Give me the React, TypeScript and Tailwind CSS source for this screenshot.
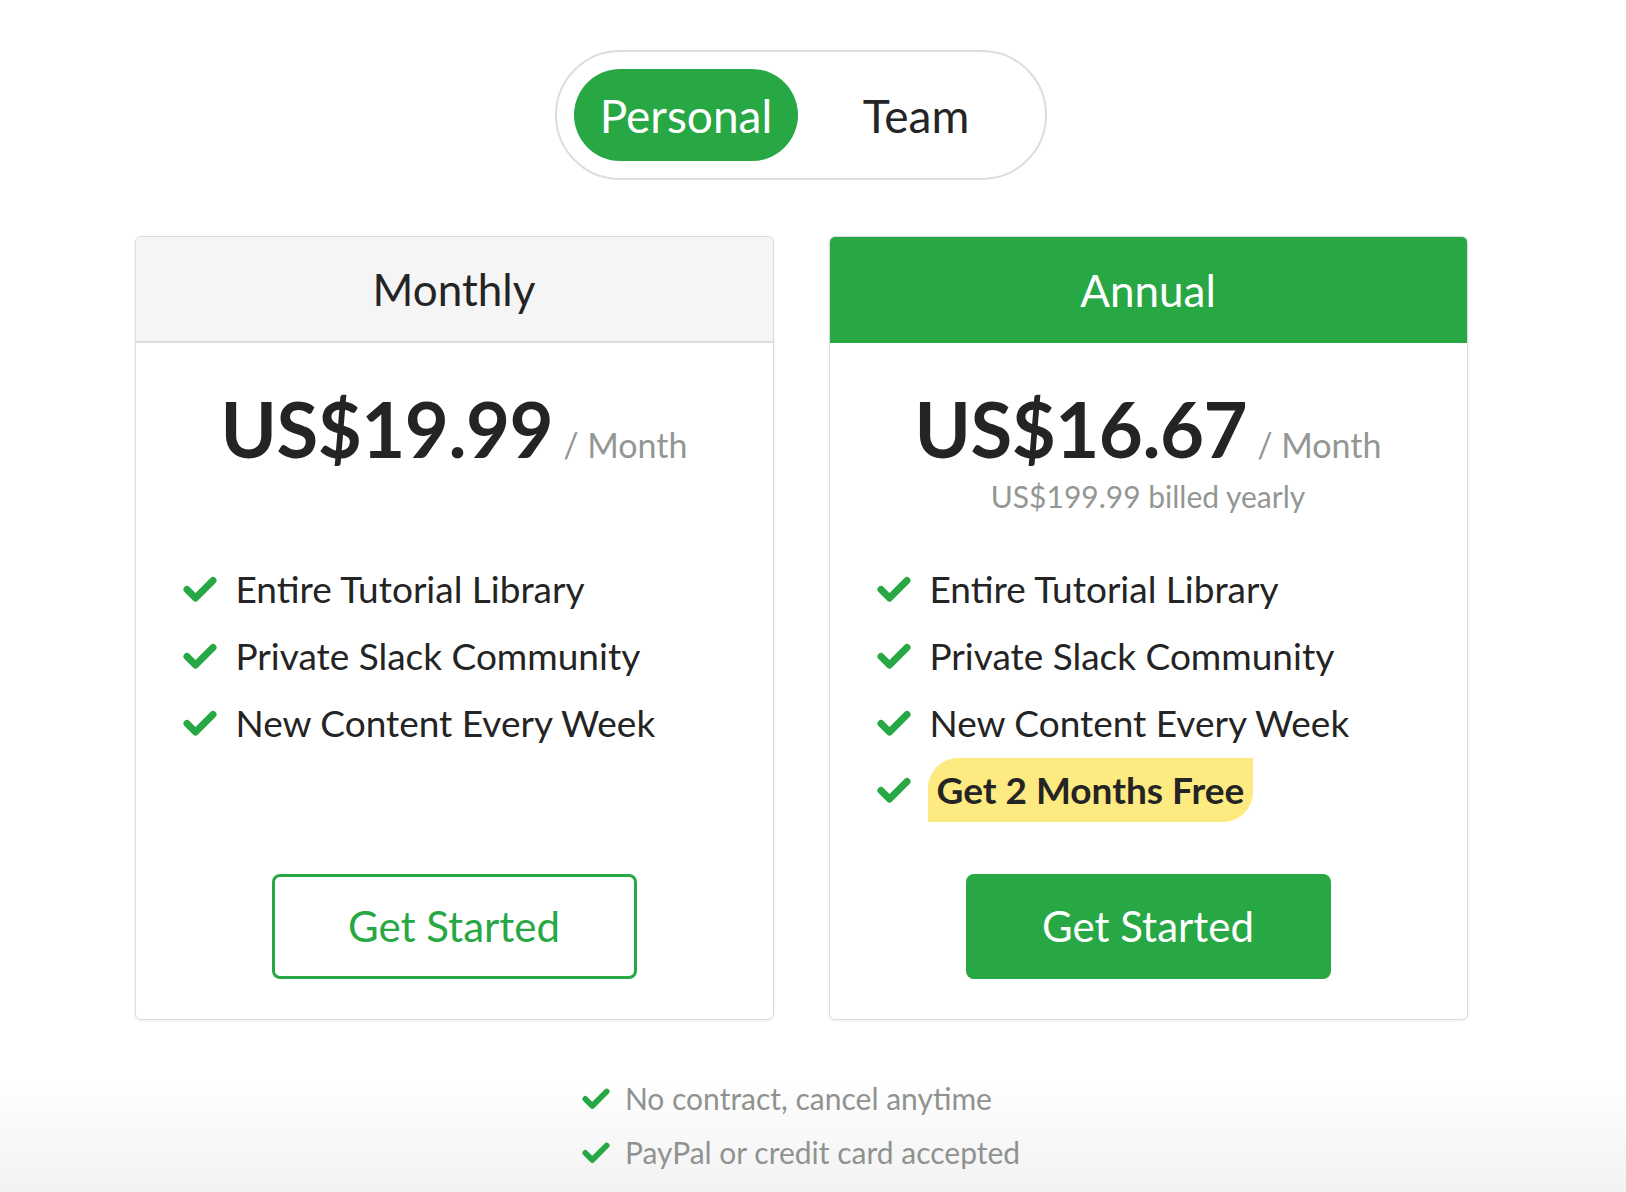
import React from "react";

const font = { fontFamily: "Lato, 'Noto Sans', sans-serif" };

function Check({ className = "" }: { className?: string }) {
  return (
    <svg viewBox="0 0 34 28" className={className} fill="none">
      <path d="M4 14.5 L12.5 23 L30 5.5" stroke="#28a745" strokeWidth="7" strokeLinecap="round" strokeLinejoin="round" />
    </svg>
  );
}

function Feature({ children }: { children: React.ReactNode }) {
  return (
    <div className="flex h-[67px] items-center">
      <Check className="h-[28px] w-[34px] shrink-0" />
      <span className="ml-[19px] text-[37px] text-[#242424]">{children}</span>
    </div>
  );
}

function Card({
  title,
  price,
  billed,
  highlight,
  primary,
}: {
  title: string;
  price: string;
  billed?: string;
  highlight?: boolean;
  primary?: boolean;
}) {
  return (
    <div className="flex h-[784px] w-[639px] flex-col overflow-hidden rounded-[6px] border border-[#dcdcdc] bg-white shadow-[0_1px_3px_rgba(0,0,0,0.08)]">
      <div
        className={
          primary
            ? "flex h-[106px] shrink-0 items-center justify-center bg-[#28a745] text-[44px] text-white"
            : "flex h-[106px] shrink-0 items-center justify-center border-b-2 border-[#dddddd] bg-[#f5f5f5] text-[44px] text-[#242424]"
        }
      >
        {title}
      </div>
      <div className="flex h-[212px] shrink-0 flex-col items-center pt-[48px]">
        <div className="flex items-baseline leading-none">
          <span className="text-[76px] font-bold tracking-[-0.5px] text-[#242424]">{price}</span>
          <span className="ml-[10px] text-[34px] text-[#939793]">/ Month</span>
        </div>
        {billed && <div className="mt-[14px] text-[30px] leading-none text-[#939793]">{billed}</div>}
      </div>
      <div className="flex flex-col px-[47px]">
        <Feature>Entire Tutorial Library</Feature>
        <Feature>Private Slack Community</Feature>
        <Feature>New Content Every Week</Feature>
        {highlight && (
          <div className="flex h-[67px] items-center">
            <Check className="h-[28px] w-[34px] shrink-0" />
            <span className="ml-[17px] flex h-[64px] items-center rounded-tl-[30px] rounded-br-[30px] bg-[#fdea80] px-[9px] text-[37px] font-bold text-[#242424]">
              Get 2 Months Free
            </span>
          </div>
        )}
      </div>
      <div className="mt-auto mb-[40px] flex justify-center">
        <button
          className={
            primary
              ? "flex h-[105px] w-[365px] items-center justify-center rounded-[8px] bg-[#28a745] text-[42px] text-white"
              : "flex h-[105px] w-[365px] items-center justify-center rounded-[8px] border-[3px] border-[#28a745] bg-white text-[42px] text-[#28a745]"
          }
        >
          Get Started
        </button>
      </div>
    </div>
  );
}

export default function App() {
  return (
    <div
      style={font}
      className="h-[1192px] w-full overflow-hidden bg-[linear-gradient(to_bottom,#ffffff_0px,#ffffff_1080px,#f2f2f2_1192px)]"
    >
      <div className="flex w-[1602px] flex-col items-center pt-[50px]">
        <div className="flex h-[130px] w-[492px] items-center rounded-full border-2 border-[#dddddd] px-[17px]">
          <button className="flex h-[92px] w-[228px] items-center justify-center rounded-full bg-[#28a745] text-[46px] text-white">
            Personal
          </button>
          <button className="ml-[6px] flex h-[92px] w-[228px] items-center justify-center text-[46px] text-[#242424]">
            Team
          </button>
        </div>
        <div className="mt-[56px] flex gap-[55px]">
          <Card title="Monthly" price="US$19.99" />
          <Card title="Annual" price="US$16.67" billed="US$199.99 billed yearly" highlight primary />
        </div>
        <div className="mt-[51px] flex flex-col">
          <div className="flex h-[54px] items-center">
            <Check className="h-[23px] w-[28px] shrink-0" />
            <span className="ml-[15px] text-[30px] text-[#8f938f]">No contract, cancel anytime</span>
          </div>
          <div className="flex h-[54px] items-center">
            <Check className="h-[23px] w-[28px] shrink-0" />
            <span className="ml-[15px] text-[30px] text-[#8f938f]">PayPal or credit card accepted</span>
          </div>
        </div>
      </div>
    </div>
  );
}
